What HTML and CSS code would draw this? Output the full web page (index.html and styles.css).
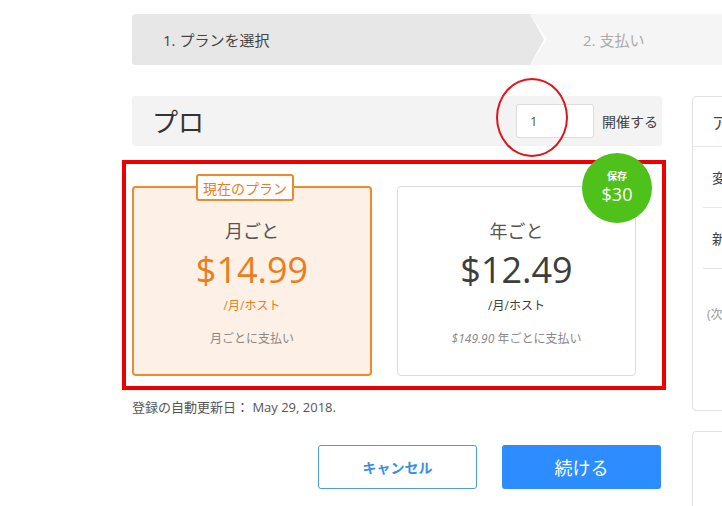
FILE: index.html
```html
<!DOCTYPE html>
<html lang="ja">
<head>
<meta charset="utf-8">
<title>プラン</title>
<link rel="stylesheet" href="styles.css">
</head>
<body>
<div class="page">
  <div class="steps">
    <div class="step step-active">1. プランを選択</div>
    <div class="step step-next">2. 支払い</div>
  </div>
  <div class="layout">
    <main class="main">
      <div class="plan-head">
        <h1 class="plan-title">プロ</h1>
        <div class="hosts">
          <div class="host-input">1</div>
          <span class="host-label">開催する</span>
          <span class="mark-circle"></span>
        </div>
      </div>
      <div class="cards">
        <div class="mark-rect"></div>
        <div class="card card-current">
          <span class="current-tag">現在のプラン</span>
          <div class="card-period">月ごと</div>
          <div class="card-price">$14.99</div>
          <div class="card-unit">/月/ホスト</div>
          <div class="card-note">月ごとに支払い</div>
        </div>
        <div class="card card-year">
          <div class="save-badge"><span class="save-label">保存</span><span class="save-amount">$30</span></div>
          <div class="card-period">年ごと</div>
          <div class="card-price">$12.49</div>
          <div class="card-unit">/月/ホスト</div>
          <div class="card-note"><em>$149.90</em> 年ごとに支払い</div>
        </div>
      </div>
      <p class="renew">登録の自動更新日： May 29, 2018.</p>
      <div class="actions">
        <button class="btn btn-cancel">キャンセル</button>
        <button class="btn btn-continue">続ける</button>
      </div>
    </main>
    <aside class="side">
      <div class="panel">
        <div class="panel-head">アカウントの概要</div>
        <div class="panel-row">変更後のプラン</div>
        <div class="panel-row">新しい料金</div>
        <div class="panel-foot">(次回の請求日に適用されます)</div>
      </div>
      <div class="panel panel-second"></div>
    </aside>
  </div>
</div>
</body>
</html>
```

FILE: styles.css
```css
* { box-sizing: border-box; }
html, body {
  margin: 0;
  padding: 0;
  background: #fff;
  overflow: hidden;
}
body {
  font-family: "Open Sans", "Noto Sans CJK JP", sans-serif;
  color: #444;
  width: 722px;
  height: 506px;
}
.page {
  padding: 14px 0 0 132px;
  width: 960px;
}
.steps {
  display: flex;
  height: 51px;
  background: #f5f5f5;
  border-radius: 4px;
}
.step {
  display: flex;
  align-items: center;
  font-size: 15px;
}
.step-active {
  position: relative;
  width: 398px;
  background: #e7e7e7;
  color: #444;
  padding-left: 31px;
  border-radius: 4px 0 0 4px;
}
.step-active::before,
.step-active::after {
  content: "";
  position: absolute;
  top: 0;
  height: 100%;
  clip-path: polygon(0 0, 100% 50%, 0 100%);
}
.step-active::before {
  right: -17px;
  width: 17px;
  background: #fff;
}
.step-active::after {
  right: -14px;
  width: 14px;
  background: #e7e7e7;
}
.step-next {
  padding-left: 53px;
  color: #aaa;
}
.layout {
  display: flex;
  gap: 30px;
  margin-top: 31px;
}
.main {
  width: 530px;
  flex: none;
}
.plan-head {
  height: 50px;
  background: #f3f3f3;
  border-radius: 3px;
  display: flex;
  align-items: center;
  justify-content: space-between;
  padding: 0 4px 0 20px;
}
.plan-title {
  margin: 0;
  font-size: 26px;
  font-weight: 400;
  color: #333;
}
.hosts {
  position: relative;
  display: flex;
  align-items: center;
  gap: 8px;
}
.host-input {
  width: 78px;
  height: 34px;
  background: #fff;
  border: 1px solid #dcdcdc;
  border-radius: 3px;
  font-size: 13px;
  color: #555;
  display: flex;
  align-items: center;
  padding-left: 13px;
}
.host-label {
  font-size: 14px;
  color: #444;
}
.mark-circle {
  position: absolute;
  left: -20px;
  top: -26px;
  width: 72px;
  height: 79px;
  border: 2.5px solid #e0141b;
  border-radius: 50%;
}
.cards {
  position: relative;
  display: flex;
  gap: 25px;
  margin-top: 40px;
}
.mark-rect {
  position: absolute;
  left: -10px;
  top: -26px;
  width: 544px;
  height: 230px;
  border: 4px solid #ee0000;
  pointer-events: none;
}
.card {
  position: relative;
  width: 240px;
  height: 190px;
  border-radius: 4px;
  display: flex;
  flex-direction: column;
  align-items: center;
  padding-top: 31px;
}
.card-current {
  background: #fdf0e6;
  border: 2px solid #ec8a2c;
  color: #ec7d1c;
}
.card-year {
  width: 239px;
  background: #fff;
  border: 1px solid #dcdcdc;
  color: #3d3d3d;
  padding-top: 32px;
}
.current-tag {
  position: absolute;
  left: 62px;
  top: -14px;
  width: 98px;
  height: 27px;
  background: #fff;
  border: 2px solid #ec8a2c;
  border-radius: 3px;
  font-size: 14px;
  color: #ec7d1c;
  display: flex;
  align-items: center;
  justify-content: center;
}
.card-period {
  font-size: 18px;
  color: #555;
  line-height: 24px;
}
.card-price {
  font-size: 36px;
  line-height: 44px;
  margin-top: 5px;
}
.card-unit {
  font-size: 12px;
  line-height: 16px;
  margin-top: 6px;
}
.card-note {
  font-size: 12px;
  color: #888;
  margin-top: 17px;
  line-height: 16px;
}
.card-note em {
  font-style: italic;
}
.save-badge {
  position: absolute;
  right: -17px;
  top: -34px;
  width: 70px;
  height: 70px;
  border-radius: 50%;
  background: #4fc11b;
  color: #fff;
  display: flex;
  flex-direction: column;
  align-items: center;
  justify-content: center;
  padding-bottom: 2px;
}
.save-label {
  font-size: 10px;
  font-weight: 700;
  line-height: 14px;
}
.save-amount {
  font-size: 18px;
  line-height: 22px;
}
.renew {
  margin: 23px 0 0;
  font-size: 13px;
  color: #555;
  line-height: 16px;
}
.actions {
  display: flex;
  justify-content: flex-end;
  gap: 25px;
  margin-top: 30px;
  padding-right: 1px;
}
.btn {
  width: 159px;
  height: 44px;
  border-radius: 3px;
  font-family: "Open Sans", "Noto Sans CJK JP", sans-serif;
  cursor: pointer;
}
.btn-cancel {
  background: #fff;
  border: 1px solid #4a9de6;
  color: #3a8fe0;
  font-size: 14px;
  font-weight: 700;
}
.btn-continue {
  background: #2d8cff;
  border: none;
  color: #fff;
  font-size: 18px;
}
.side {
  width: 260px;
  flex: none;
}
.panel {
  border: 1px solid #e2e2e2;
  border-radius: 4px;
  height: 315px;
}
.panel-head {
  height: 50px;
  display: flex;
  align-items: center;
  padding-left: 19px;
  font-size: 16px;
  color: #444;
  border-bottom: 1px solid #e6e6e6;
}
.panel-row {
  height: 61px;
  display: flex;
  align-items: center;
  margin-left: 10px;
  padding-left: 9px;
  font-size: 14px;
  color: #444;
  border-bottom: 1px solid #e6e6e6;
}
.panel-foot {
  padding: 36px 0 0 14px;
  font-size: 12px;
  color: #999;
}
.panel-second {
  margin-top: 20px;
  height: 100px;
}
```
